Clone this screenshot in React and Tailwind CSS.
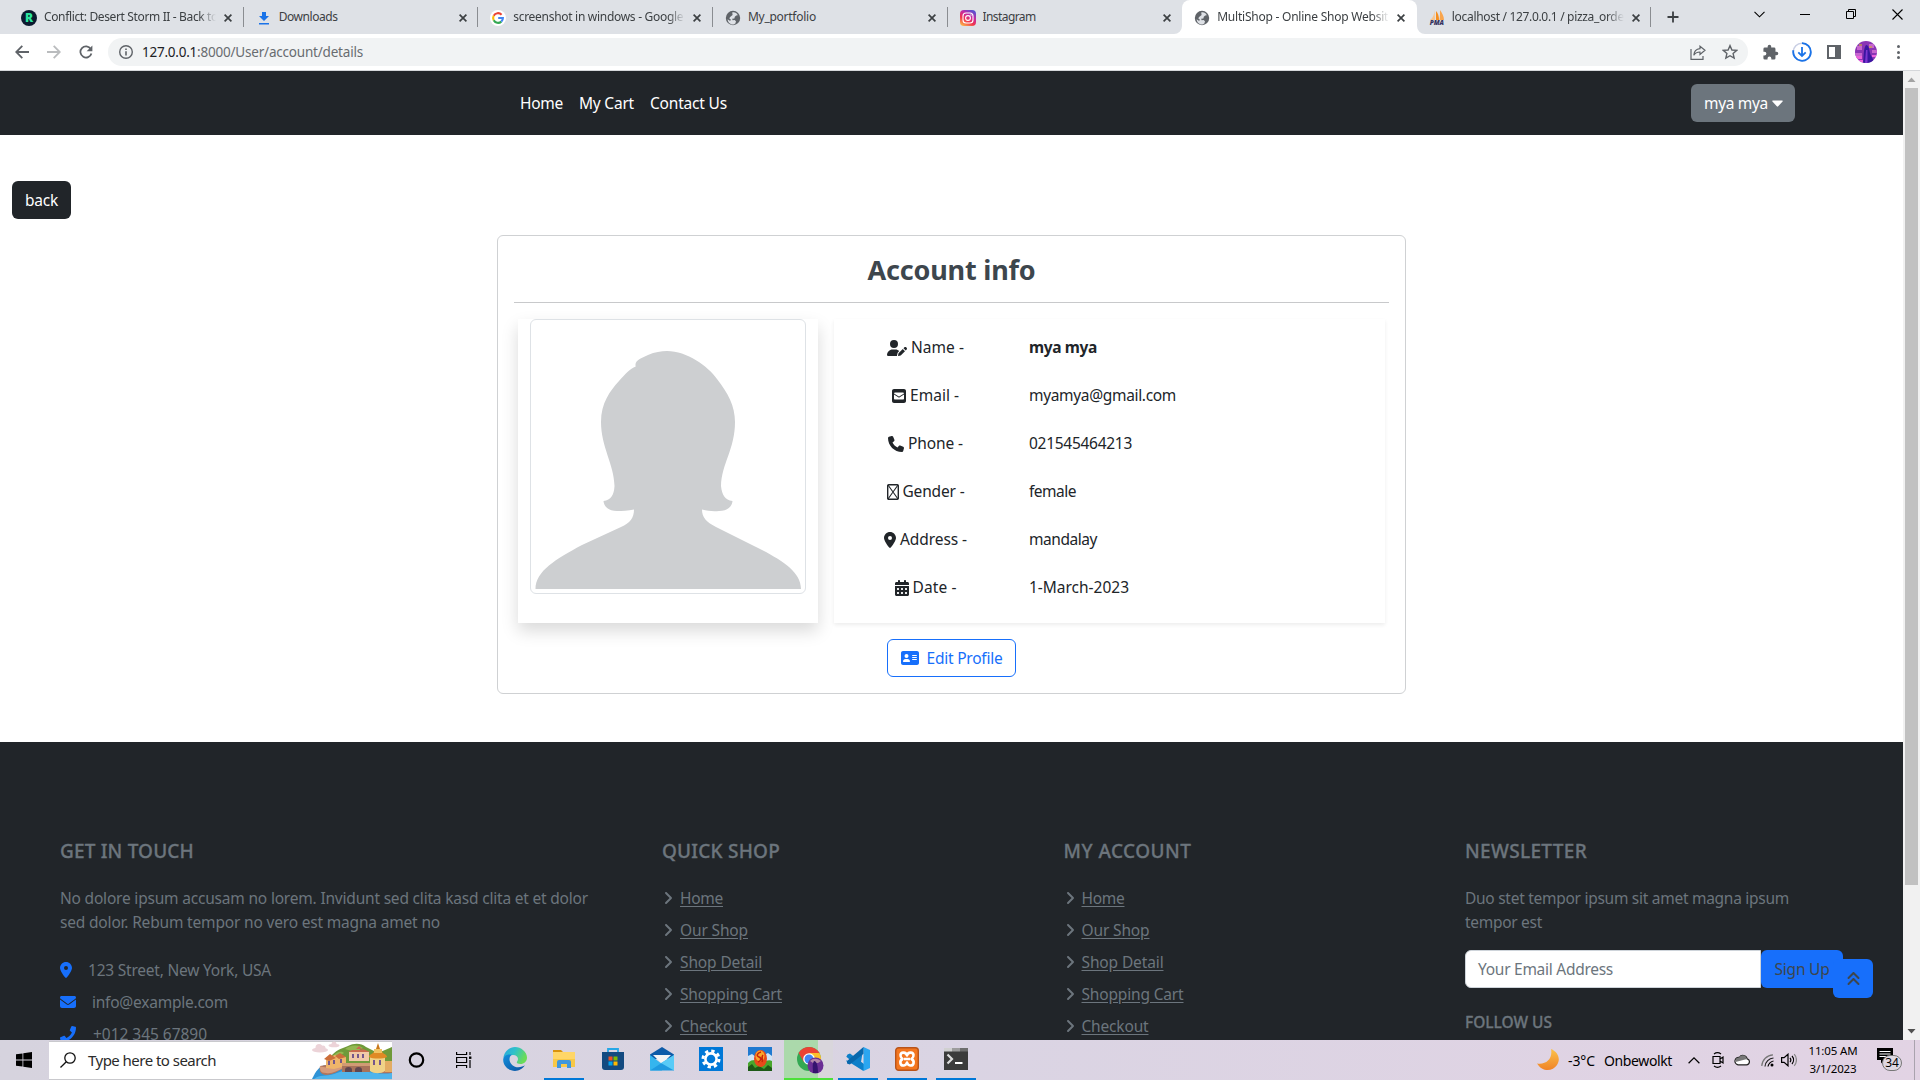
import React, { useLayoutEffect, useRef, useState } from "react";
import {
  FaUserPen, FaSquareEnvelope, FaPhone, FaLocationDot, FaCalendarDays,
  FaAddressCard, FaEnvelope, FaAngleRight, FaAnglesUp,
} from "react-icons/fa6";
import { FaPhone as FaPhoneClassic } from "react-icons/fa";

/* Single line of text whose tracking is adjusted so that it spans w pixels. */
function Fit({ w, children, className = "" }) {
  const ref = useRef(null);
  const [spacing, setSpacing] = useState(0);
  useLayoutEffect(() => {
    const natural = ref.current.getBoundingClientRect().width;
    setSpacing((w - natural) / Math.max(1, String(children).length));
  }, [w, children]);
  return (
    <span className={`inline-block shrink-0 whitespace-nowrap ${className}`} style={{ width: w }}>
      <span ref={ref} className="whitespace-nowrap" style={{ letterSpacing: spacing }}>{children}</span>
    </span>
  );
}

/* ---------- browser chrome ---------- */

const Globe = () => (
  <svg className="size-4" viewBox="0 0 16 16">
    <circle cx="8" cy="8" r="7.2" fill="#5f6368" />
    <path d="M7.200 2.600c2-.8 4.800.4 5.600 2.600l-1.600.2-1.400 1.400-.4 1.800-2.200.2.4 1.400 2-.2 1.400 1.200-.6 2.200-1.800 1c-3.200.4-5.800-2-6-5.200l2.600 1.800.6-1.600-1.600-1.200 1.200-1.400L7.600 5z" fill="#dee1e6" />
  </svg>
);
const RLogo = () => (
  <span className="flex size-4 items-center justify-center rounded-full bg-[#0c1a30] text-[12px] leading-none font-black text-[#2ce6a0]">R</span>
);
const DownloadFav = () => (
  <svg className="size-4" viewBox="0 0 16 16" fill="#1a73e8"><path d="M6 2h4v4h3l-5 5-5-5h3zM3 13h10v1.6H3z" /></svg>
);
const GoogleFav = () => (
  <svg className="size-4" viewBox="0 0 16 16">
    <circle cx="8" cy="8" r="8" fill="#fff" />
    <g fill="none" strokeWidth="2.1">
      <path d="M11.6 4.7A4.9 4.9 0 0 0 3.7 5.7" stroke="#ea4335" />
      <path d="M3.7 5.7a4.9 4.9 0 0 0 0 4.6" stroke="#fbbc05" />
      <path d="M3.7 10.3a4.9 4.9 0 0 0 7.6 1.3" stroke="#34a853" />
      <path d="M11.3 11.6A4.9 4.9 0 0 0 12.9 8H8.2" stroke="#4285f4" />
    </g>
  </svg>
);
const InstaFav = () => (
  <svg className="size-4" viewBox="0 0 16 16">
    <defs>
      <linearGradient id="ig" x1="0.1" y1="1" x2="0.7" y2="0">
        <stop offset="0" stopColor="#fdc04a" /><stop offset="0.4" stopColor="#f0344f" /><stop offset="0.7" stopColor="#c42aa3" /><stop offset="1" stopColor="#5b4fd0" />
      </linearGradient>
    </defs>
    <rect width="16" height="16" rx="4" fill="url(#ig)" />
    <rect x="3" y="3" width="10" height="10" rx="3" fill="none" stroke="#fff" strokeWidth="1.1" />
    <circle cx="8" cy="8" r="2.4" fill="none" stroke="#fff" strokeWidth="1.1" /><circle cx="11" cy="5" r=".7" fill="#fff" />
  </svg>
);
const PmaFav = () => (
  <span className="flex h-4 w-4 flex-col items-center">
    <svg className="h-[10px] w-4 shrink-0" viewBox="0 0 16 10"><path d="M5.5 0C5.5 4 4 8 1 10h5z" fill="#f9c58e" /><path d="M7 1v9h3C10 6 9 3 7 1z" fill="#f68e1e" /><path d="M11 0c0 4 0 7-.5 10H15C15 6 13 3 11 0z" fill="#f9a54d" /></svg>
    <span className="text-[6.5px] leading-[6px] font-black text-[#35325e] italic">PMA</span>
  </span>
);

const TABS = [
  { icon: <RLogo />, title: "Conflict: Desert Storm II - Back to", w: 174, fade: true },
  { icon: <DownloadFav />, title: "Downloads", w: 59 },
  { icon: <GoogleFav />, title: "screenshot in windows - Google", w: 170, fade: true },
  { icon: <Globe />, title: "My_portfolio", w: 68 },
  { icon: <InstaFav />, title: "Instagram", w: 53, last: true },
  { icon: <Globe />, title: "MultiShop - Online Shop Websit", w: 171, fade: true, active: true },
  { icon: <PmaFav />, title: "localhost / 127.0.0.1 / pizza_orde", w: 172, fade: true },
];

function Tab({ icon, title, w, fade, active, last }) {
  return (
    <div className={`relative flex h-[34px] w-[234.65px] shrink-0 items-center pt-px pl-3 ${active ? "rounded-t-lg bg-white" : ""}`}>
      <span className="flex size-4 shrink-0">{icon}</span>
      <span className={`-mt-px ml-[7px] flex w-[172px] overflow-hidden text-[12px] leading-[18px] text-[#3c4043] ${fade ? "[mask-image:linear-gradient(to_right,black_90%,transparent)]" : ""}`}>
        <Fit w={w}>{title}</Fit>
      </span>
      <svg className="ml-[8px] size-2 shrink-0" viewBox="0 0 8 8" stroke="#3c4043" strokeWidth="1.7"><path d="M.6.6l6.8 6.8M7.4.6.6 7.4" /></svg>
      {active && (
        <>
          <svg className="absolute bottom-0 -left-2 size-2" viewBox="0 0 8 8"><path d="M8 0v8H0a8 8 0 0 0 8-8z" fill="#fff" /></svg>
          <svg className="absolute -right-2 bottom-0 size-2" viewBox="0 0 8 8"><path d="M0 0v8h8a8 8 0 0 1-8-8z" fill="#fff" /></svg>
        </>
      )}
      {!active && !last && <span className="absolute top-[7px] right-0 h-5 w-px bg-[#8a8d91]" />}
    </div>
  );
}

function TabStrip() {
  return (
    <div className="flex h-[34px] bg-[#dee1e6] pl-[9px]">
      {TABS.map((t) => <Tab key={t.title} {...t} />)}
      <svg className="mt-[11px] ml-[16px] size-3" viewBox="0 0 12 12" stroke="#3c4043" strokeWidth="1.8"><path d="M6 .5v11M.5 6h11" /></svg>
      <div className="ml-auto flex h-7 items-center text-black">
        <div className="flex w-[46px] justify-center"><svg className="h-[7px] w-[11px]" viewBox="0 0 11 7" fill="none" stroke="currentColor" strokeWidth="1.1"><path d="M.5.8l5 5 5-5" /></svg></div>
        <div className="flex w-[46px] justify-center"><span className="mt-px h-px w-[10px] bg-black" /></div>
        <div className="flex w-[46px] justify-center"><svg className="size-[10px]" viewBox="0 0 10 10" fill="none" stroke="currentColor"><path d="M.5 2.5h7v7h-7zM2.5 2.5v-2h7v7h-2" /></svg></div>
        <div className="flex w-[46px] justify-center"><svg className="size-[11px]" viewBox="0 0 11 11" stroke="currentColor" strokeWidth="1.1"><path d="M.5.5l10 10M10.5.5l-10 10" /></svg></div>
      </div>
    </div>
  );
}

function Toolbar() {
  return (
    <div className="flex h-[37px] items-center border-b border-[#d5d7da] bg-white pl-[6px] text-[#5f6368]">
      <div className="flex w-8 justify-center"><svg className="size-[14px]" viewBox="0 0 14 14" fill="none" stroke="currentColor" strokeWidth="1.8"><path d="M14 7H1.5M7.3.8 1.2 7l6.1 6.2" /></svg></div>
      <div className="flex w-8 justify-center text-[#babcbe]"><svg className="size-[14px]" viewBox="0 0 14 14" fill="none" stroke="currentColor" strokeWidth="1.8"><path d="M0 7h12.5M6.7.8 12.8 7l-6.1 6.2" /></svg></div>
      <div className="flex w-8 justify-center"><svg className="size-[14px]" viewBox="0 0 15 15"><path d="M12.6 4.2A6 6 0 1 0 13.3 9" fill="none" stroke="currentColor" strokeWidth="1.9" /><path d="M14.3.6v6.1H8.2z" fill="currentColor" /></svg></div>
      <div className="ml-[6px] flex h-7 w-[1640px] items-center rounded-full bg-[#f1f3f4] pl-[11px]">
        <svg className="size-[14px]" viewBox="0 0 14 14" fill="none" stroke="currentColor" strokeWidth="1.4"><circle cx="7" cy="7" r="6.3" /><path d="M7 6.2v4.2M7 3.5v1.6" strokeWidth="1.6" /></svg>
        <span className="ml-[9px] flex text-[13.5px] leading-5">
          <Fit w={55} className="text-[#202124]">127.0.0.1</Fit>
          <Fit w={166} className="text-[#686c70]">:8000/User/account/details</Fit>
        </span>
        <div className="ml-auto flex items-center pr-[2px]">
          <div className="flex w-8 justify-center"><svg className="h-[15px] w-4" viewBox="0 0 16 15" fill="none" stroke="currentColor" strokeWidth="1.2"><path d="M1 4v10.3h12V11M10 1.2l5 4.1-5 4.2V7C7 7 5 8 3.8 10.3 4 6.500 6 4 10 3.600z" /></svg></div>
          <div className="flex w-8 justify-center"><svg className="size-[16px]" viewBox="0 0 15 15" fill="none" stroke="currentColor" strokeWidth="1.3"><path d="M7.500 1.500l1.800 4.100 4.500.4-3.400 2.900 1 4.400-3.900-2.300-3.900 2.300 1-4.400L1.200 6l4.500-.4z" /></svg></div>
        </div>
      </div>
      <div className="ml-[6px] flex items-center">
        <div className="flex w-8 justify-center"><svg className="size-[17px]" viewBox="0 0 24 24" fill="currentColor"><path d="M20.500 11H19V7a2 2 0 0 0-2-2h-4V3.500a2.500 2.500 0 0 0-5 0V5H4a2 2 0 0 0-2 2v3.800h1.500a2.700 2.700 0 0 1 0 5.400H2V20a2 2 0 0 0 2 2h3.800v-1.500a2.700 2.700 0 0 1 5.400 0V22H17a2 2 0 0 0 2-2v-4h1.500a2.500 2.500 0 0 0 0-5z" /></svg></div>
        <div className="flex w-8 justify-center"><svg className="size-5" viewBox="0 0 20 20" fill="none"><circle cx="10" cy="10" r="8.800" stroke="#c9cfe4" strokeWidth="1.600" /><path d="M10 1.200a8.800 8.800 0 1 1-8.600 7" stroke="#1a73e8" strokeWidth="1.800" /><path d="M10 5v9M6.300 10.300 10 14l3.700-3.700" stroke="#1a73e8" strokeWidth="1.800" /></svg></div>
        <div className="flex w-8 justify-center"><svg className="size-[14px]" viewBox="0 0 14 14"><path d="M1 1h12v12H1z" fill="none" stroke="currentColor" strokeWidth="2" /><path d="M8 1h5v12H8z" fill="currentColor" /></svg></div>
        <div className="flex w-8 justify-center">
          <svg className="size-[22px]" viewBox="0 0 22 22"><defs><clipPath id="av"><circle cx="11" cy="11" r="11" /></clipPath></defs><g clipPath="url(#av)"><path fill="#8a35b5" d="M0 0h22v22H0z" /><path fill="#c765cf" d="M2 5h5v4H2zM14 3h5v4h-5zM0 12h7v3H0zM17 9h5v3h-5z" /><path fill="#c7a04a" d="M4 3h3v2H4zM14 5h3v2h-3z" opacity=".7" /><path fill="#3a16a0" d="M11 4c3 0 3 4 4 8s4 6 4 10H8c1-5 0-14 3-18z" /><path fill="#7b35d0" d="M11 9h1.500v13H10z" /><path fill="#ec62dc" d="M1 15h6v3H1zM3 19h5v3H3zM17 14h4v2h-4z" /></g></svg>
        </div>
        <div className="flex w-8 flex-col items-center gap-[2.500px]">
          <span className="size-[3px] rounded-full bg-[#5f6368]" /><span className="size-[3px] rounded-full bg-[#5f6368]" /><span className="size-[3px] rounded-full bg-[#5f6368]" />
        </div>
      </div>
    </div>
  );
}

/* ---------- page ---------- */

function Navbar() {
  return (
    <nav className="flex h-16 items-center bg-[#212529] pl-[520px] text-[15.500px] text-white">
      <Fit w={43} className="pt-[2px]">Home</Fit>
      <Fit w={55} className="ml-4 pt-[2px]">My Cart</Fit>
      <Fit w={77} className="ml-4 pt-[2px]">Contact Us</Fit>
      <button className="mr-[108px] ml-auto flex h-[38px] w-[104px] items-center rounded-md bg-[#6c757d] pl-[13px]">
        <Fit w={64} className="pt-[2px]">mya mya</Fit>
        <svg className="ml-[4px] h-[7px] w-[11px]" viewBox="0 0 11 7" fill="#fff"><path d="M.8.500h9.400c.6 0 .8.500.4.900L6.200 6.300a1 1 0 0 1-1.400 0L.4 1.400C0 1 .2.500.8.500z" /></svg>
      </button>
    </nav>
  );
}

const MissingGlyph = () => (
  <svg className="h-4 w-3" viewBox="0 0 12 16" fill="none" stroke="currentColor"><rect x=".7" y=".7" width="10.600" height="14.600" rx="1" strokeWidth="1.400" /><path d="M1 1l10 14M11 1 1 15" strokeWidth="1.100" /></svg>
);

const ROWS = [
  { icon: <FaUserPen className="h-4 w-5" />, label: "Name -", lw: 53, value: "mya mya", vw: 68, bold: true },
  { icon: <FaSquareEnvelope className="h-4 w-[14px]" />, label: "Email -", lw: 49, value: "myamya@gmail.com", vw: 147 },
  { icon: <FaPhone className="size-4" />, label: "Phone -", lw: 55, value: "021545464213", vw: 103 },
  { icon: <MissingGlyph />, label: "Gender -", lw: 62, value: "female", vw: 47 },
  { icon: <FaLocationDot className="h-4 w-3" />, label: "Address -", lw: 67, value: "mandalay", vw: 68 },
  { icon: <FaCalendarDays className="h-4 w-[14px]" />, label: "Date -", lw: 44, value: "1-March-2023", vw: 100 },
];

function Silhouette() {
  return (
    <svg className="size-[266px]" viewBox="0 0 266 266">
      <path fill="#cdcfd1" d="M132 27C152 27 173 42 182 55C193 69 200 82 200 98C200 125 186.500 140 186 162C187 171 190 176 197.500 177C197 183 192 187 184 187C178 187.500 173 187 167 185.500C167 193 171 198 181 203L220 222.500C245 235 266 247 266 265H0.500C0.500 247 21 235 47 221L86 203C95 199 99 194 99 185.500C93 187 87 187 82 187C74 187 69 183 68.500 177C76 176 79 171 79.500 162C79 140 66 123 66 98C66 79 75 67 84 57C90 50 95 45 100.700 42.500C99 36 107 34 113 31C120 28 126 27 132 27Z" />
    </svg>
  );
}

function AccountCard() {
  return (
    <section className="mx-auto mt-4 h-[459px] w-[909px] rounded-md border border-[#cfd1d3] bg-white px-4 pt-4">
      <h3 className="flex h-[34px] items-center justify-center pt-[2px] text-[27px] font-bold text-[#3d464d]"><Fit w={168}>Account info</Fit></h3>
      <hr className="mt-4 border-[#c8c9cb]" />
      <div className="mt-4 flex pl-1">
        <div className="h-[304px] w-[300px] bg-white px-3 shadow-[0_8px_16px_rgba(0,0,0,0.15)]">
          <div className="h-[275px] w-[276px] overflow-hidden rounded-md border border-[#dee2e6] p-1"><Silhouette /></div>
        </div>
        <div className="ml-4 h-[304px] w-[551px] bg-white pt-[5px] text-[15.500px] text-[#212529] shadow-[0_2px_4px_rgba(0,0,0,0.075)]">
          {ROWS.map((r) => (
            <div key={r.label} className="flex h-12 items-center">
              <div className="flex w-[183px] items-center justify-center gap-1">
                <span className="-mt-px flex">{r.icon}</span><Fit w={r.lw}>{r.label}</Fit>
              </div>
              <Fit w={r.vw} className={r.bold ? "ml-3 font-bold" : "ml-3"}>{r.value}</Fit>
            </div>
          ))}
        </div>
      </div>
      <div className="mt-4 flex justify-center">
        <button className="flex h-[38px] w-[129px] items-center justify-center gap-[8px] rounded-md border border-[#176ffb] text-[15.500px] text-[#176ffb]">
          <FaAddressCard className="h-4 w-[18px]" /><Fit w={76} className="pt-[2px]">Edit Profile</Fit>
        </button>
      </div>
    </section>
  );
}

const LINKS = [["Home", 43], ["Our Shop", 68], ["Shop Detail", 82], ["Shopping Cart", 102], ["Checkout", 67]];

function ColumnTitle({ w, children }) {
  return (
    <h5 className="flex h-6 items-center text-[19px] font-medium [-webkit-text-stroke:0.3px_#6c757d]"><Fit w={w}>{children}</Fit></h5>
  );
}

function LinkColumn({ title, w }) {
  return (
    <div className="w-[401.500px] shrink-0">
      <ColumnTitle w={w}>{title}</ColumnTitle>
      <div className="mt-[23px] flex flex-col gap-2">
        {LINKS.map(([label, lw]) => (
          <a key={label} className="flex h-6 items-center">
            <FaAngleRight className="-ml-px h-4 w-[14px] shrink-0" />
            <Fit w={lw} className="ml-[5px] underline underline-offset-2">{label}</Fit>
          </a>
        ))}
      </div>
    </div>
  );
}

function Footer() {
  return (
    <footer className="relative mt-12 flex h-[298px] overflow-hidden bg-[#212529] pt-[97px] pl-[60px] text-[15.500px] leading-6 text-[#6c757d]">
      <div className="w-[602px] shrink-0">
        <ColumnTitle w={134}>GET IN TOUCH</ColumnTitle>
        <p className="mt-[23px] flex flex-col">
          <Fit w={528}>No dolore ipsum accusam no lorem. Invidunt sed clita kasd clita et et dolor</Fit>
          <Fit w={380}>sed dolor. Rebum tempor no vero est magna amet no</Fit>
        </p>
        <div className="mt-6 flex h-6 items-center"><FaLocationDot className="h-4 w-3 text-[#176ffb]" /><Fit w={183} className="ml-4">123 Street, New York, USA</Fit></div>
        <div className="mt-2 flex h-6 items-center"><FaEnvelope className="size-4 text-[#176ffb]" /><Fit w={136} className="ml-4">info@example.com</Fit></div>
        <div className="mt-2 flex h-6 items-center"><FaPhoneClassic className="size-4 text-[#176ffb]" /><Fit w={114} className="ml-[17px]">+012 345 67890</Fit></div>
      </div>
      <LinkColumn title="QUICK SHOP" w={118} />
      <LinkColumn title="MY ACCOUNT" w={128} />
      <div className="shrink-0">
        <ColumnTitle w={122}>NEWSLETTER</ColumnTitle>
        <p className="mt-[23px] flex flex-col">
          <Fit w={324}>Duo stet tempor ipsum sit amet magna ipsum</Fit>
          <Fit w={77}>tempor est</Fit>
        </p>
        <div className="mt-4 flex h-[38px]">
          <div className="flex w-[296px] items-center rounded-l-md border border-[#ced4da] bg-white pl-3"><Fit w={135}>Your Email Address</Fit></div>
          <button className="flex w-[82px] items-center justify-center rounded-md bg-[#176ffb] text-[#3d464d]"><Fit w={55}>Sign Up</Fit></button>
        </div>
        <h6 className="mt-[22px] flex h-6 items-center text-[15.500px] font-medium [-webkit-text-stroke:0.3px_#6c757d]"><Fit w={87}>FOLLOW US</Fit></h6>
      </div>
      <button className="absolute right-[30px] bottom-[42px] flex h-[39px] w-10 items-center justify-center rounded-md bg-[#176ffb] text-[#3d464d]"><FaAnglesUp className="h-4 w-[15px]" /></button>
    </footer>
  );
}

function Scrollbar() {
  return (
    <div className="flex w-[17px] shrink-0 flex-col items-center bg-[#f1f1f1]">
      <svg className="h-[17px] w-[17px]" viewBox="0 0 17 17" fill="#a3a3a3"><path d="M8.500 6.500 12.500 11h-8z" /></svg>
      <div className="h-[797px] w-[13px] bg-[#c1c1c1]" />
      <svg className="mt-auto h-[17px] w-[17px]" viewBox="0 0 17 17" fill="#505050"><path d="M8.500 10.500 12.500 6h-8z" /></svg>
    </div>
  );
}

/* ---------- taskbar ---------- */

const Riviera = () => (
  <svg className="ml-auto h-[38px] w-20" viewBox="0 0 80 38">
    <path d="M20 14C26 8 31 7 36 5C42 2 49 2 54 6C58 8 62 10 66 12L80 6V26H18z" fill="#6f9a3a" />
    <path d="M33 8c5-4 13-5 18-1l-8 4zM22 14c4-4 8-4 10-2l-6 4z" fill="#93b852" />
    <path d="M0 38C4 30 7 25 14 24L80 26V38z" fill="#2f93d6" />
    <path d="M2 38C8 33 14 36 22 33s16-6 30-3 20 3 28 2v6z" fill="#4fb4ec" />
    <path d="M8 25c-1 5 0 8 6 9 7 0 12-4 18-7h26c2 5 8 6 22 5v-9H20z" fill="#b3765c" />
    <path d="M8 25c6 3 14 1 20-3l6 1-3 4c-6 3-11 6-17 5-6 0-6-3-6-7z" fill="#d69b7c" />
    <path d="M14 17l9-3 11 2v9l-12 3-8-1z" fill="#efb56a" />
    <path d="M12 18l6-5 6 4-7 3zM23 15l5-3 6 4-7 2z" fill="#cc6e3a" />
    <path d="M37 11h20v9H37z" fill="#f1c9a8" /><path d="M36 11l4-2h8l3-1 7 3zM44 8l3-3 3 3z" fill="#c86a4e" />
    <path d="M30 22h28v3H30z" fill="#d19b74" /><path d="M30 25h28v6H30z" fill="#a9725a" />
    <path d="M33 31v-2a3.500 3 0 0 1 7 0v2zm10 0v-2a3.500 3 0 0 1 7 0v2z" fill="#5f4650" />
    <path d="M58 16h15v14c-4 3-11 3-15 0z" fill="#f0d287" /><path d="M73 20h7v11h-7z" fill="#e3ac63" />
    <path d="M57 16c0-3 5-3 5-6 0-3 8-3 8 0 0 3 5 3 5 6-4 2-14 2-18 0z" fill="#e08a24" /><path d="M66 2l2 6h-4z" fill="#c9791c" /><path d="M62 8h8v4h-8z" fill="#f1c362" />
    <path d="M16 20h2v4h-2zm5-1h2v4h-2zm7-1h2v4h-2zM40 13h2v4h-2zm5 0h2v4h-2zm5 0h2v4h-2zM61 19h2v5h-2zm6 0h2v5h-2z" fill="#75578c" />
    <g fill="#ecd3d8"><ellipse cx="8" cy="9" rx="8" ry="2.600" /><circle cx="7" cy="6.500" r="3.500" /><circle cx="11" cy="7" r="2.500" /><ellipse cx="22" cy="4.500" rx="5.500" ry="1.800" /><circle cx="22" cy="3" r="2.500" /></g>
  </svg>
);

const ICONS = {
  cortana: <svg className="h-4 w-[17px]" viewBox="0 0 17 16"><circle cx="8.500" cy="8" r="6.700" fill="none" stroke="#000" strokeWidth="2.200" /></svg>,
  taskview: <svg className="size-4" viewBox="0 0 16 16" fill="none" stroke="#000" strokeWidth="1.200"><path d="M.6 0v2.500h10V0M.6 5.500h10v5H.6zM.6 16v-2.500h10V16M14 0v3M14 8v8" /><path d="M13 4.500h2.400v2.400H13z" fill="#000" stroke="none" /></svg>,
  edge: (
    <svg className="size-6" viewBox="0 0 24 24">
      <defs><linearGradient id="e1" x1="0" y1="0" x2="1" y2=".4"><stop offset="0" stopColor="#2aa5e0" /><stop offset=".5" stopColor="#2fc1c9" /><stop offset="1" stopColor="#6bdc58" /></linearGradient><linearGradient id="e2" x1="0" y1="0" x2="1" y2="1"><stop offset="0" stopColor="#1390dd" /><stop offset="1" stopColor="#0c519f" /></linearGradient></defs>
      <path d="M.4 11C1 4.600 6 0 12 0s12 5 12 10.500c0 4-3 6.500-6.500 6.500-3 0-4.300-1.200-3.500-2.300 2.300-3 .5-6.700-4-6.700C5 8 1 10 .4 11z" fill="url(#e1)" />
      <path d="M.2 12.500C.6 9 4 6.500 9 7.800c-3.500 1.500-4 9 3 12 4 1.500 8-.3 9.800-1.500C20 21.500 16 24 12 24 5.500 24 0 19 .2 12.500z" fill="url(#e2)" />
    </svg>
  ),
  explorer: <svg className="h-5 w-6" viewBox="0 0 24 20"><path d="M1 1h8l2 2H1z" fill="#d9930d" /><path d="M1 3h22v15H1z" fill="#ffd667" /><path d="M1 10h22v8H1z" fill="#f8c846" /><path d="M5 19v-6a2 2 0 0 1 2-2h10a2 2 0 0 1 2 2v6h-4v-4H9v4z" fill="#3f97dc" /></svg>,
  store: <svg className="h-6 w-6" viewBox="0 0 24 24"><path d="M7 6V2h10v4" fill="none" stroke="#26a7e6" strokeWidth="1.800" /><path d="M1 5h22v15a3 3 0 0 1-3 3H4a3 3 0 0 1-3-3z" fill="#134a80" /><path d="M7.500 9.500h4v4h-4z" fill="#f25022" /><path d="M12.500 9.500h4v4h-4z" fill="#7fba00" /><path d="M7.500 14.500h4v4h-4z" fill="#00a4ef" /><path d="M12.500 14.500h4v4h-4z" fill="#ffb900" /></svg>,
  mail: <svg className="h-6 w-6" viewBox="0 0 24 24"><path d="M0 7.500 12 0l12 7.500V12H0z" fill="#0d5ba8" /><path d="M3 8h18l-9 9z" fill="#f4f4f4" /><path d="M0 8l12 9v6.500H0z" fill="#35b5ee" /><path d="M24 8v15.500H0z" fill="#1f9ae0" /><path d="M24 8v15.500L11 16z" fill="#58cbf7" /></svg>,
  settings: <svg className="h-6 w-6" viewBox="0 0 24 24"><path d="M0 0h24v24H0z" fill="#0078d7" /><circle cx="12" cy="12" r="8" fill="none" stroke="#fff" strokeWidth="3" strokeDasharray="3.300 2.983" /><circle cx="12" cy="12" r="5.600" fill="none" stroke="#fff" strokeWidth="2.600" /></svg>,
  game: <svg className="h-6 w-6" viewBox="0 0 24 24"><path d="M0 0h24v24H0z" fill="#1f79d0" /><path d="M0 9l4-2 4 3 8-2 4-2 4 3v8H0z" fill="#cfe4f6" /><path d="M0 16c4-4 8-3 12-2s9-2 12 0v10H0z" fill="#49a52c" /><path d="M0 20l4-3 3 4 4-2 5 3 4-4 4 3v3H0z" fill="#1d5a17" /><ellipse cx="12.500" cy="11.500" rx="6.500" ry="8.500" fill="#e8491a" /><ellipse cx="12" cy="9" rx="4.500" ry="5.500" fill="#f9a72b" /><path d="M13 5c-4 1-5 4-2 5s2 4-1 5M15 8c-2 2 0 4-1 7" fill="none" stroke="#c9240b" strokeWidth="1.600" /></svg>,
  chrome: (
    <svg className="mt-[2px] ml-[3px] h-[27px] w-[27px]" viewBox="0 0 27 27">
      <circle cx="12" cy="12" r="12" fill="#34a853" /><path d="M1.600 6A12 12 0 0 1 22.400 6H12L6.800 15z" fill="#ea4335" /><path d="M22.400 6a12 12 0 0 1-10.400 18L17.200 15 12 6z" fill="#fbc02d" />
      <circle cx="12" cy="12" r="5.800" fill="#fff" /><circle cx="12" cy="12" r="4.500" fill="#4285f4" />
      <circle cx="18.500" cy="18.500" r="8" fill="#6b2f95" /><path d="M13 14c3-3 7-3 11 0l-3 2h-5z" fill="#b387a8" /><path d="M17 14c3 0 4 5 4 12h-5c0-5-1-9 1-12z" fill="#35136f" />
    </svg>
  ),
  vscode: <svg className="h-6 w-6" viewBox="0 0 24 24"><path d="M17.500.3 4.500 13 1.800 15.200.3 14.300v-1L17 23.700l1-.2V17L4 6.500 1.500 7.600.3 9.700 14 21z" fill="#0d7fc9" /><path d="M17.500 0 24 3v18l-6.500 3z" fill="#2ba6f0" /><path d="M17.500 0v6.800L3.800 17.500 1 16.500V14z" fill="#0868ad" /></svg>,
  xampp: <svg className="h-6 w-6" viewBox="0 0 24 24"><rect x=".7" y=".7" width="22.600" height="22.600" rx="3" fill="#f3761f" stroke="#b9541a" strokeWidth="1.400" /><path d="M12 8.500C11 5 6 4.500 5.500 8c-.3 2 .8 3 2 4-1.800 1-2.500 2.500-2 4.500 1 3 5.500 2.500 6.500-1 1 3.500 5.500 4 6.500 1 .5-2-.2-3.500-2-4.500 1.200-1 2.300-2 2-4C18 4.500 13 5 12 8.500zM9 12h6" fill="none" stroke="#fff" strokeWidth="2.600" strokeLinejoin="round" /></svg>,
  terminal: <svg className="h-[22px] w-6" viewBox="0 0 24 22"><path d="M0 0h24v22H0z" fill="#3b3b3b" /><path d="M0 0h8v3.500H0z" fill="#d0d0d0" /><path d="M8 0h8v3.500H8z" fill="#9c9c9c" /><path d="M16 0h8v3.500h-8z" fill="#6e6e6e" /><path d="M3.500 6.500 8 11l-4.500 4.500" fill="none" stroke="#ddd" strokeWidth="2.200" /><path d="M11 14h7.500v2H11z" fill="#fff" /></svg>,
};

const APPS = [
  { id: "edge" }, { id: "explorer", run: true }, { id: "store" }, { id: "mail" }, { id: "settings" }, { id: "game" },
  { id: "chrome", active: true }, { id: "vscode", run: true }, { id: "xampp", run: true }, { id: "terminal", run: true },
];

function Taskbar() {
  return (
    <div className="flex h-10 items-center bg-linear-to-r from-[#d6d3de] via-[#dad4e3] to-[#e2d3e4] text-black">
      <div className="flex w-[49px] shrink-0 justify-center pr-px"><svg className="size-4" viewBox="0 0 16 16"><path d="M0 2.300 6.500 1.400v6.200H0zM7.300 1.300 16 0v7.600H7.300zM0 8.400h6.500v6.200L0 13.700zM7.300 8.400H16V16l-8.700-1.200z" /></svg></div>
      <div className="flex h-[39px] w-[343px] shrink-0 items-center border-y border-[#c9c9cd] bg-white pl-[11px]">
        <svg className="size-4" viewBox="0 0 16 16" fill="none" stroke="#111" strokeWidth="1.300"><circle cx="10" cy="6" r="5.200" /><path d="M6.300 9.700.500 15.500" /></svg>
        <Fit w={128} className="ml-3 text-[15px] text-[#2b2b2b]">Type here to search</Fit>
        <Riviera />
      </div>
      <div className="flex w-12 justify-center">{ICONS.cortana}</div>
      <div className="flex w-12 justify-center">{ICONS.taskview}</div>
      <div className="ml-[2px] flex h-10">
        {APPS.map((a) => (
          <div key={a.id} className={`flex w-[49px] flex-col items-center ${a.active ? "bg-[linear-gradient(to_right,#abd9ab_34px,#d9d6dc_34px)]" : ""}`}>
            <span className="flex h-[38px] items-center">{ICONS[a.id]}</span>
            {a.run && <span className="h-[2px] w-10 bg-[#0078d7]" />}
            {a.active && <span className="h-[2px] w-full bg-[#4ce03a]" />}
          </div>
        ))}
      </div>
      <div className="ml-auto flex h-10 items-center text-[14px]">
        <svg className="h-[22px] w-[22px]" viewBox="0 0 22 22"><defs><linearGradient id="moon" x1="0" y1="0" x2="0" y2="1"><stop offset="0" stopColor="#fbc24a" /><stop offset="1" stopColor="#f08327" /></linearGradient></defs><path d="M14 0c7 3 10 10 6 16S6 24 0 14.500C9 16 16 10 14 0z" fill="url(#moon)" /></svg>
        <Fit w={27} className="ml-[9px]">-3°C</Fit>
        <Fit w={68} className="ml-[9px]">Onbewolkt</Fit>
        <svg className="ml-4 h-[7px] w-3" viewBox="0 0 12 7" fill="none" stroke="#000" strokeWidth="1.200"><path d="M.6 6.200 6 .9l5.400 5.300" /></svg>
        <svg className="ml-3 h-4 w-3" viewBox="0 0 12 16" fill="none" stroke="#000" strokeWidth="1.200"><path d="M1 4.500h7v7H1zM8 7l3-2v6L8 9M2 2c2-1.500 5-1.500 7 0M2 14c2 1.500 5 1.500 7 0" /></svg>
        <svg className="ml-[10px] h-3 w-4" viewBox="0 0 16 12"><path d="M4 10.800h8.500a3 3 0 0 0 .7-5.900A4.300 4.300 0 0 0 5.300 3.500 3.700 3.700 0 0 0 4 10.800z" fill="#fff" stroke="#222" strokeWidth="1.200" /><path d="M1.500 8C1 5 3 3.500 5.300 3.500 7 0 12 .5 13 5z" fill="#777" /></svg>
        <svg className="ml-[11px] size-[13px]" viewBox="0 0 13 13" fill="none" strokeWidth="1.200"><path d="M.8 12C1 6 6 1 12 .8" stroke="#777" /><path d="M4 12.500C4.300 8 8 4.300 12.500 4" stroke="#222" /><path d="M7 12.500C7.300 10 10 7.300 12.500 7" stroke="#000" /><circle cx="11" cy="11" r="1.500" fill="#000" /></svg>
        <svg className="ml-[7px] h-[14px] w-4" viewBox="0 0 16 14" fill="none" stroke="#000" strokeWidth="1.200"><path d="M.6 4.700h2.500L7 1.200v11.600L3.100 9.300H.6zM9 4.800c1 1.300 1 3.100 0 4.400M11 3c2 2.300 2 5.700 0 8" /><path d="M13.200 1.200c3 3.300 3 8.300 0 11.600" stroke="#888" /></svg>
        <div className="ml-[11px] flex w-[50px] flex-col items-center text-[11.500px] leading-[18px]"><Fit w={49}>11:05 AM</Fit><Fit w={47}>3/1/2023</Fit></div>
        <div className="relative ml-[19px] h-6 w-[26px]">
          <svg className="size-4" viewBox="0 0 16 16"><path d="M0 0h16v12H7l-3 3.500V12H0z" /><path d="M2.500 3.500h11M2.500 6h11M2.500 8.500h7" stroke="#fff" /></svg>
          <span className="absolute top-[7px] left-[5px] flex h-4 w-5 items-center justify-center rounded-full border border-[#777] bg-[#dfd8e2] text-[12px] leading-none">34</span>
        </div>
        <span className="ml-[11px] mr-[5px] h-10 w-px bg-[#aaa3ae]" />
      </div>
    </div>
  );
}

export default function App() {
  return (
    <div className="flex h-[1080px] w-[1920px] flex-col overflow-hidden bg-white font-['Noto_Sans',sans-serif]">
      <TabStrip />
      <Toolbar />
      <div className="flex h-[969px]">
        <main className="w-[1903px] overflow-hidden bg-white">
          <Navbar />
          <div className="pt-[46px] pl-3">
            <button className="flex h-[38px] w-[59px] items-center justify-center rounded-md bg-[#212529] text-[15.500px] text-white"><Fit w={33} className="pt-[2px]">back</Fit></button>
          </div>
          <AccountCard />
          <Footer />
        </main>
        <Scrollbar />
      </div>
      <Taskbar />
    </div>
  );
}
